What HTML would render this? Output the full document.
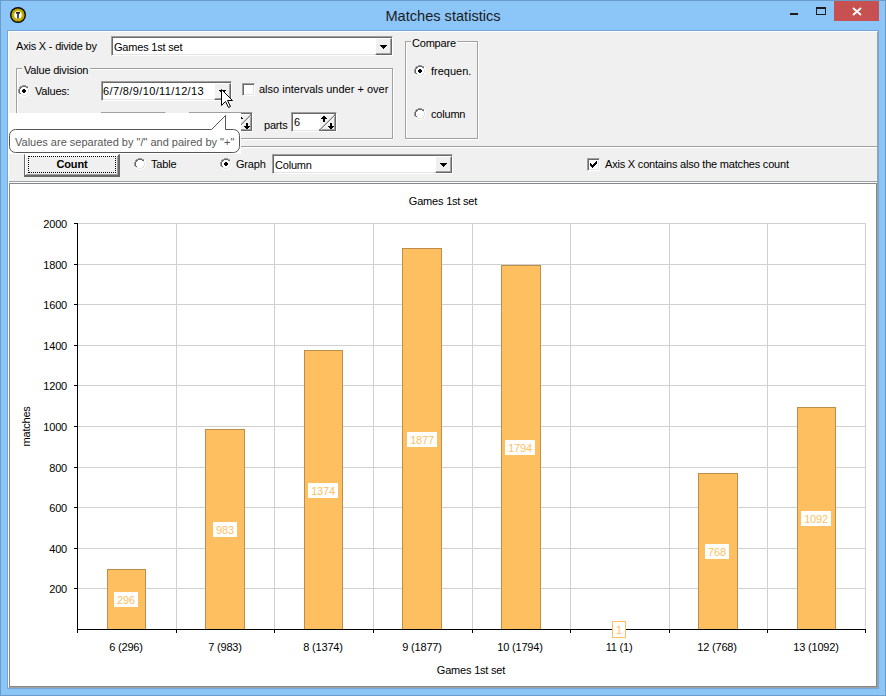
<!DOCTYPE html>
<html><head><meta charset="utf-8">
<style>
*{box-sizing:border-box}
html,body{margin:0;padding:0}
body{width:886px;height:696px;position:relative;overflow:hidden;background:#8cc6f8;font-family:"Liberation Sans",sans-serif;font-size:11px;color:#000}
.a{position:absolute}
.t{position:absolute;white-space:nowrap;line-height:11px;font-size:11px;letter-spacing:-0.2px}
svg{display:block}
</style></head><body>
<div class="a" style="left:0px;top:0px;width:886px;height:696px;border:1px solid #6b9bc9;background:#8cc6f8"></div>
<div class="t" style="left:0;top:9px;width:886px;text-align:center;font-size:14.6px;line-height:15px;letter-spacing:0;color:#1b1b1b">Matches statistics</div>
<svg class="a" style="left:10px;top:7px" width="16" height="16" viewBox="0 0 16 16">
<circle cx="8" cy="8" r="8" fill="#0a0a0a"/>
<circle cx="8" cy="8" r="6.6" fill="#bfa800"/>
<circle cx="8" cy="8" r="5.2" fill="#c9b410" stroke="#a89000" stroke-width="0.6" stroke-dasharray="1 1"/>
<circle cx="8" cy="8" r="3.7" fill="#fff"/>
<rect x="6" y="5" width="4" height="1.6" fill="#222"/>
<rect x="7.2" y="5" width="1.6" height="6.5" fill="#222"/>
</svg>
<div class="a" style="left:790px;top:13px;width:8px;height:2px;background:#1e1a1a"></div>
<div class="a" style="left:816px;top:7px;width:10px;height:8px;border:1px solid #1e1a1a;border-top-width:2px"></div>
<div class="a" style="left:834px;top:1px;width:45px;height:20px;background:#c75050"></div>
<svg class="a" style="left:852px;top:7px" width="10" height="9" viewBox="0 0 10 9"><path d="M1 1L9 8M9 1L1 8" stroke="#fff" stroke-width="1.8"/></svg>
<div class="a" style="left:7px;top:30px;width:872px;height:659px;border:1px solid #72a7da"></div>
<div class="a" style="left:8px;top:31px;width:870px;height:657px;background:#f0f0f0;border-left:1px solid #fff;border-top:1px solid #fff;border-right:1px solid #a0a0a0;border-bottom:1px solid #a0a0a0"></div>
<div class="t" style="left:16px;top:41px;">Axis X - divide by</div>
<div class="a" style="left:111px;top:36px;width:282px;height:20px;background:#fff;border:1px solid;border-color:#a0a0a0 #fff #fff #a0a0a0;box-shadow:inset 1px 1px #696969, inset -1px -1px #e3e3e3"></div>
<div class="a" style="left:375px;top:38px;width:17px;height:17px;background:#f0f0f0;border-style:solid;border-width:1px 1px 1px 1px;border-color:#fff #696969 #696969 #fff;box-shadow:inset -1px -1px #a0a0a0"></div>
<svg class="a" style="left:380px;top:45px" width="7" height="4" shape-rendering="crispEdges"><rect x="0" y="0" width="7" height="1"/><rect x="1" y="1" width="5" height="1"/><rect x="2" y="2" width="3" height="1"/><rect x="3" y="3" width="1" height="1"/></svg>
<div class="t" style="left:114px;top:42px;">Games 1st set</div>
<div class="a" style="left:16px;top:68px;width:377px;height:71px;border:1px solid #a0a0a0;box-shadow:inset 1px 1px #fff, 1px 1px #fff"></div>
<div class="t" style="left:22px;top:65px;padding:0 2px;background:#f0f0f0">Value division</div>
<svg class="a" style="left:18px;top:85px" width="12" height="12" shape-rendering="crispEdges"><rect x="4" y="0" width="4" height="1" fill="#a0a0a0"/><rect x="2" y="1" width="2" height="1" fill="#a0a0a0"/><rect x="4" y="1" width="4" height="1" fill="#696969"/><rect x="8" y="1" width="2" height="1" fill="#a0a0a0"/><rect x="1" y="2" width="1" height="1" fill="#a0a0a0"/><rect x="2" y="2" width="2" height="1" fill="#696969"/><rect x="4" y="2" width="4" height="1" fill="#fff"/><rect x="8" y="2" width="2" height="1" fill="#696969"/><rect x="10" y="2" width="1" height="1" fill="#fff"/><rect x="1" y="3" width="1" height="1" fill="#a0a0a0"/><rect x="2" y="3" width="1" height="1" fill="#696969"/><rect x="3" y="3" width="6" height="1" fill="#fff"/><rect x="9" y="3" width="1" height="1" fill="#e3e3e3"/><rect x="10" y="3" width="1" height="1" fill="#fff"/><rect x="0" y="4" width="1" height="1" fill="#a0a0a0"/><rect x="1" y="4" width="1" height="1" fill="#696969"/><rect x="2" y="4" width="8" height="1" fill="#fff"/><rect x="10" y="4" width="1" height="1" fill="#e3e3e3"/><rect x="11" y="4" width="1" height="1" fill="#fff"/><rect x="0" y="5" width="1" height="1" fill="#a0a0a0"/><rect x="1" y="5" width="1" height="1" fill="#696969"/><rect x="2" y="5" width="8" height="1" fill="#fff"/><rect x="10" y="5" width="1" height="1" fill="#e3e3e3"/><rect x="11" y="5" width="1" height="1" fill="#fff"/><rect x="0" y="6" width="1" height="1" fill="#a0a0a0"/><rect x="1" y="6" width="1" height="1" fill="#696969"/><rect x="2" y="6" width="8" height="1" fill="#fff"/><rect x="10" y="6" width="1" height="1" fill="#e3e3e3"/><rect x="11" y="6" width="1" height="1" fill="#fff"/><rect x="0" y="7" width="1" height="1" fill="#a0a0a0"/><rect x="1" y="7" width="1" height="1" fill="#696969"/><rect x="2" y="7" width="8" height="1" fill="#fff"/><rect x="10" y="7" width="1" height="1" fill="#e3e3e3"/><rect x="11" y="7" width="1" height="1" fill="#fff"/><rect x="1" y="8" width="1" height="1" fill="#a0a0a0"/><rect x="2" y="8" width="1" height="1" fill="#696969"/><rect x="3" y="8" width="6" height="1" fill="#fff"/><rect x="9" y="8" width="1" height="1" fill="#e3e3e3"/><rect x="10" y="8" width="1" height="1" fill="#fff"/><rect x="1" y="9" width="1" height="1" fill="#fff"/><rect x="2" y="9" width="2" height="1" fill="#e3e3e3"/><rect x="4" y="9" width="4" height="1" fill="#fff"/><rect x="8" y="9" width="2" height="1" fill="#e3e3e3"/><rect x="10" y="9" width="1" height="1" fill="#fff"/><rect x="2" y="10" width="2" height="1" fill="#fff"/><rect x="4" y="10" width="4" height="1" fill="#e3e3e3"/><rect x="8" y="10" width="2" height="1" fill="#fff"/><rect x="4" y="11" width="4" height="1" fill="#fff"/><rect x="5" y="4" width="2" height="1" fill="#000"/><rect x="4" y="5" width="4" height="1" fill="#000"/><rect x="4" y="6" width="4" height="1" fill="#000"/><rect x="5" y="7" width="2" height="1" fill="#000"/></svg>
<div class="t" style="left:35px;top:86px;">Values:</div>
<div class="a" style="left:101px;top:81px;width:131px;height:20px;background:#fff;border:1px solid;border-color:#a0a0a0 #fff #fff #a0a0a0;box-shadow:inset 1px 1px #696969, inset -1px -1px #e3e3e3"></div>
<div class="a" style="left:214px;top:83px;width:17px;height:17px;background:#f0f0f0;border-style:solid;border-width:1px 1px 1px 1px;border-color:#fff #696969 #696969 #fff;box-shadow:inset -1px -1px #a0a0a0"></div>
<svg class="a" style="left:219px;top:90px" width="7" height="4" shape-rendering="crispEdges"><rect x="0" y="0" width="7" height="1"/><rect x="1" y="1" width="5" height="1"/><rect x="2" y="2" width="3" height="1"/><rect x="3" y="3" width="1" height="1"/></svg>
<div class="t" style="left:103px;top:86px;letter-spacing:0.37px">6/7/8/9/10/11/12/13</div>
<div class="a" style="left:242px;top:83px;width:13px;height:13px;background:#fff;border:1px solid;border-color:#a0a0a0 #fff #fff #a0a0a0;box-shadow:inset 1px 1px #696969, inset -1px -1px #e3e3e3"></div>
<div class="t" style="left:259px;top:84px;letter-spacing:0">also intervals under + over</div>
<div class="a" style="left:101px;top:112px;width:65px;height:20px;background:#fff;border:1px solid;border-color:#a0a0a0 #fff #fff #a0a0a0;box-shadow:inset 1px 1px #696969, inset -1px -1px #e3e3e3"></div>
<div class="a" style="left:189px;top:112px;width:64px;height:20px;background:#fff;border:1px solid;border-color:#a0a0a0 #fff #fff #a0a0a0;box-shadow:inset 1px 1px #696969, inset -1px -1px #e3e3e3"></div>
<svg class="a" style="left:235px;top:114px" width="17" height="17" viewBox="0 0 17 17" shape-rendering="crispEdges">
<rect x="1" y="1" width="14" height="14" fill="#f0f0f0"/>
<rect x="15" y="0" width="1" height="16" fill="#a0a0a0"/><rect x="16" y="0" width="1" height="17" fill="#696969"/>
<rect x="0" y="15" width="16" height="1" fill="#a0a0a0"/><rect x="0" y="16" width="17" height="1" fill="#696969"/>
<rect x="1" y="0" width="14" height="1" fill="#fff"/>
<path d="M0.5 16.5L16.5 0.5" stroke="#7a7a7a" shape-rendering="auto" stroke-width="1.1"/>
<path d="M2 16L16 2" stroke="#fff" shape-rendering="auto" stroke-width="0.8"/>
<rect x="4" y="2" width="2" height="1"/><rect x="3" y="3" width="4" height="1"/><rect x="2" y="4" width="6" height="1"/><rect x="4" y="5" width="2" height="3"/>
<rect x="11" y="9" width="2" height="3"/><rect x="9" y="12" width="6" height="1"/><rect x="10" y="13" width="4" height="1"/><rect x="11" y="14" width="2" height="1"/>
</svg>
<div class="a" style="left:291px;top:112px;width:46px;height:20px;background:#fff;border:1px solid;border-color:#a0a0a0 #fff #fff #a0a0a0;box-shadow:inset 1px 1px #696969, inset -1px -1px #e3e3e3"></div>
<svg class="a" style="left:319px;top:114px" width="17" height="17" viewBox="0 0 17 17" shape-rendering="crispEdges">
<rect x="1" y="1" width="14" height="14" fill="#f0f0f0"/>
<rect x="15" y="0" width="1" height="16" fill="#a0a0a0"/><rect x="16" y="0" width="1" height="17" fill="#696969"/>
<rect x="0" y="15" width="16" height="1" fill="#a0a0a0"/><rect x="0" y="16" width="17" height="1" fill="#696969"/>
<rect x="1" y="0" width="14" height="1" fill="#fff"/>
<path d="M0.5 16.5L16.5 0.5" stroke="#7a7a7a" shape-rendering="auto" stroke-width="1.1"/>
<path d="M2 16L16 2" stroke="#fff" shape-rendering="auto" stroke-width="0.8"/>
<rect x="4" y="2" width="2" height="1"/><rect x="3" y="3" width="4" height="1"/><rect x="2" y="4" width="6" height="1"/><rect x="4" y="5" width="2" height="3"/>
<rect x="11" y="9" width="2" height="3"/><rect x="9" y="12" width="6" height="1"/><rect x="10" y="13" width="4" height="1"/><rect x="11" y="14" width="2" height="1"/>
</svg>
<div class="t" style="left:264px;top:120px;">parts</div>
<div class="t" style="left:294px;top:117px;">6</div>
<div class="a" style="left:405px;top:41px;width:73px;height:98px;border:1px solid #a0a0a0;box-shadow:inset 1px 1px #fff, 1px 1px #fff"></div>
<div class="t" style="left:411px;top:38px;padding:0 1px;background:#f0f0f0">Compare</div>
<svg class="a" style="left:414px;top:65px" width="12" height="12" shape-rendering="crispEdges"><rect x="4" y="0" width="4" height="1" fill="#a0a0a0"/><rect x="2" y="1" width="2" height="1" fill="#a0a0a0"/><rect x="4" y="1" width="4" height="1" fill="#696969"/><rect x="8" y="1" width="2" height="1" fill="#a0a0a0"/><rect x="1" y="2" width="1" height="1" fill="#a0a0a0"/><rect x="2" y="2" width="2" height="1" fill="#696969"/><rect x="4" y="2" width="4" height="1" fill="#fff"/><rect x="8" y="2" width="2" height="1" fill="#696969"/><rect x="10" y="2" width="1" height="1" fill="#fff"/><rect x="1" y="3" width="1" height="1" fill="#a0a0a0"/><rect x="2" y="3" width="1" height="1" fill="#696969"/><rect x="3" y="3" width="6" height="1" fill="#fff"/><rect x="9" y="3" width="1" height="1" fill="#e3e3e3"/><rect x="10" y="3" width="1" height="1" fill="#fff"/><rect x="0" y="4" width="1" height="1" fill="#a0a0a0"/><rect x="1" y="4" width="1" height="1" fill="#696969"/><rect x="2" y="4" width="8" height="1" fill="#fff"/><rect x="10" y="4" width="1" height="1" fill="#e3e3e3"/><rect x="11" y="4" width="1" height="1" fill="#fff"/><rect x="0" y="5" width="1" height="1" fill="#a0a0a0"/><rect x="1" y="5" width="1" height="1" fill="#696969"/><rect x="2" y="5" width="8" height="1" fill="#fff"/><rect x="10" y="5" width="1" height="1" fill="#e3e3e3"/><rect x="11" y="5" width="1" height="1" fill="#fff"/><rect x="0" y="6" width="1" height="1" fill="#a0a0a0"/><rect x="1" y="6" width="1" height="1" fill="#696969"/><rect x="2" y="6" width="8" height="1" fill="#fff"/><rect x="10" y="6" width="1" height="1" fill="#e3e3e3"/><rect x="11" y="6" width="1" height="1" fill="#fff"/><rect x="0" y="7" width="1" height="1" fill="#a0a0a0"/><rect x="1" y="7" width="1" height="1" fill="#696969"/><rect x="2" y="7" width="8" height="1" fill="#fff"/><rect x="10" y="7" width="1" height="1" fill="#e3e3e3"/><rect x="11" y="7" width="1" height="1" fill="#fff"/><rect x="1" y="8" width="1" height="1" fill="#a0a0a0"/><rect x="2" y="8" width="1" height="1" fill="#696969"/><rect x="3" y="8" width="6" height="1" fill="#fff"/><rect x="9" y="8" width="1" height="1" fill="#e3e3e3"/><rect x="10" y="8" width="1" height="1" fill="#fff"/><rect x="1" y="9" width="1" height="1" fill="#fff"/><rect x="2" y="9" width="2" height="1" fill="#e3e3e3"/><rect x="4" y="9" width="4" height="1" fill="#fff"/><rect x="8" y="9" width="2" height="1" fill="#e3e3e3"/><rect x="10" y="9" width="1" height="1" fill="#fff"/><rect x="2" y="10" width="2" height="1" fill="#fff"/><rect x="4" y="10" width="4" height="1" fill="#e3e3e3"/><rect x="8" y="10" width="2" height="1" fill="#fff"/><rect x="4" y="11" width="4" height="1" fill="#fff"/><rect x="5" y="4" width="2" height="1" fill="#000"/><rect x="4" y="5" width="4" height="1" fill="#000"/><rect x="4" y="6" width="4" height="1" fill="#000"/><rect x="5" y="7" width="2" height="1" fill="#000"/></svg>
<div class="t" style="left:431px;top:66px;letter-spacing:0">frequen.</div>
<svg class="a" style="left:414px;top:108px" width="12" height="12" shape-rendering="crispEdges"><rect x="4" y="0" width="4" height="1" fill="#a0a0a0"/><rect x="2" y="1" width="2" height="1" fill="#a0a0a0"/><rect x="4" y="1" width="4" height="1" fill="#696969"/><rect x="8" y="1" width="2" height="1" fill="#a0a0a0"/><rect x="1" y="2" width="1" height="1" fill="#a0a0a0"/><rect x="2" y="2" width="2" height="1" fill="#696969"/><rect x="4" y="2" width="4" height="1" fill="#fff"/><rect x="8" y="2" width="2" height="1" fill="#696969"/><rect x="10" y="2" width="1" height="1" fill="#fff"/><rect x="1" y="3" width="1" height="1" fill="#a0a0a0"/><rect x="2" y="3" width="1" height="1" fill="#696969"/><rect x="3" y="3" width="6" height="1" fill="#fff"/><rect x="9" y="3" width="1" height="1" fill="#e3e3e3"/><rect x="10" y="3" width="1" height="1" fill="#fff"/><rect x="0" y="4" width="1" height="1" fill="#a0a0a0"/><rect x="1" y="4" width="1" height="1" fill="#696969"/><rect x="2" y="4" width="8" height="1" fill="#fff"/><rect x="10" y="4" width="1" height="1" fill="#e3e3e3"/><rect x="11" y="4" width="1" height="1" fill="#fff"/><rect x="0" y="5" width="1" height="1" fill="#a0a0a0"/><rect x="1" y="5" width="1" height="1" fill="#696969"/><rect x="2" y="5" width="8" height="1" fill="#fff"/><rect x="10" y="5" width="1" height="1" fill="#e3e3e3"/><rect x="11" y="5" width="1" height="1" fill="#fff"/><rect x="0" y="6" width="1" height="1" fill="#a0a0a0"/><rect x="1" y="6" width="1" height="1" fill="#696969"/><rect x="2" y="6" width="8" height="1" fill="#fff"/><rect x="10" y="6" width="1" height="1" fill="#e3e3e3"/><rect x="11" y="6" width="1" height="1" fill="#fff"/><rect x="0" y="7" width="1" height="1" fill="#a0a0a0"/><rect x="1" y="7" width="1" height="1" fill="#696969"/><rect x="2" y="7" width="8" height="1" fill="#fff"/><rect x="10" y="7" width="1" height="1" fill="#e3e3e3"/><rect x="11" y="7" width="1" height="1" fill="#fff"/><rect x="1" y="8" width="1" height="1" fill="#a0a0a0"/><rect x="2" y="8" width="1" height="1" fill="#696969"/><rect x="3" y="8" width="6" height="1" fill="#fff"/><rect x="9" y="8" width="1" height="1" fill="#e3e3e3"/><rect x="10" y="8" width="1" height="1" fill="#fff"/><rect x="1" y="9" width="1" height="1" fill="#fff"/><rect x="2" y="9" width="2" height="1" fill="#e3e3e3"/><rect x="4" y="9" width="4" height="1" fill="#fff"/><rect x="8" y="9" width="2" height="1" fill="#e3e3e3"/><rect x="10" y="9" width="1" height="1" fill="#fff"/><rect x="2" y="10" width="2" height="1" fill="#fff"/><rect x="4" y="10" width="4" height="1" fill="#e3e3e3"/><rect x="8" y="10" width="2" height="1" fill="#fff"/><rect x="4" y="11" width="4" height="1" fill="#fff"/></svg>
<div class="t" style="left:431px;top:109px;">column</div>
<div class="a" style="left:9px;top:146px;width:868px;height:1px;background:#a0a0a0"></div>
<div class="a" style="left:9px;top:147px;width:868px;height:1px;background:#fff"></div>
<div class="a" style="left:24px;top:154px;width:96px;height:23px;border-style:solid;border-width:1px 2px 2px 1px;border-color:#fff #696969 #696969 #696969;box-shadow:inset 1px 1px #fff, inset -1px -1px #a0a0a0;background:#f0f0f0"></div>
<div class="a" style="left:28px;top:156px;width:88px;height:17px;border:1px dotted #000"></div>
<div class="t" style="left:24px;top:159px;width:96px;text-align:center;font-weight:bold">Count</div>
<svg class="a" style="left:134px;top:158px" width="12" height="12" shape-rendering="crispEdges"><rect x="4" y="0" width="4" height="1" fill="#a0a0a0"/><rect x="2" y="1" width="2" height="1" fill="#a0a0a0"/><rect x="4" y="1" width="4" height="1" fill="#696969"/><rect x="8" y="1" width="2" height="1" fill="#a0a0a0"/><rect x="1" y="2" width="1" height="1" fill="#a0a0a0"/><rect x="2" y="2" width="2" height="1" fill="#696969"/><rect x="4" y="2" width="4" height="1" fill="#fff"/><rect x="8" y="2" width="2" height="1" fill="#696969"/><rect x="10" y="2" width="1" height="1" fill="#fff"/><rect x="1" y="3" width="1" height="1" fill="#a0a0a0"/><rect x="2" y="3" width="1" height="1" fill="#696969"/><rect x="3" y="3" width="6" height="1" fill="#fff"/><rect x="9" y="3" width="1" height="1" fill="#e3e3e3"/><rect x="10" y="3" width="1" height="1" fill="#fff"/><rect x="0" y="4" width="1" height="1" fill="#a0a0a0"/><rect x="1" y="4" width="1" height="1" fill="#696969"/><rect x="2" y="4" width="8" height="1" fill="#fff"/><rect x="10" y="4" width="1" height="1" fill="#e3e3e3"/><rect x="11" y="4" width="1" height="1" fill="#fff"/><rect x="0" y="5" width="1" height="1" fill="#a0a0a0"/><rect x="1" y="5" width="1" height="1" fill="#696969"/><rect x="2" y="5" width="8" height="1" fill="#fff"/><rect x="10" y="5" width="1" height="1" fill="#e3e3e3"/><rect x="11" y="5" width="1" height="1" fill="#fff"/><rect x="0" y="6" width="1" height="1" fill="#a0a0a0"/><rect x="1" y="6" width="1" height="1" fill="#696969"/><rect x="2" y="6" width="8" height="1" fill="#fff"/><rect x="10" y="6" width="1" height="1" fill="#e3e3e3"/><rect x="11" y="6" width="1" height="1" fill="#fff"/><rect x="0" y="7" width="1" height="1" fill="#a0a0a0"/><rect x="1" y="7" width="1" height="1" fill="#696969"/><rect x="2" y="7" width="8" height="1" fill="#fff"/><rect x="10" y="7" width="1" height="1" fill="#e3e3e3"/><rect x="11" y="7" width="1" height="1" fill="#fff"/><rect x="1" y="8" width="1" height="1" fill="#a0a0a0"/><rect x="2" y="8" width="1" height="1" fill="#696969"/><rect x="3" y="8" width="6" height="1" fill="#fff"/><rect x="9" y="8" width="1" height="1" fill="#e3e3e3"/><rect x="10" y="8" width="1" height="1" fill="#fff"/><rect x="1" y="9" width="1" height="1" fill="#fff"/><rect x="2" y="9" width="2" height="1" fill="#e3e3e3"/><rect x="4" y="9" width="4" height="1" fill="#fff"/><rect x="8" y="9" width="2" height="1" fill="#e3e3e3"/><rect x="10" y="9" width="1" height="1" fill="#fff"/><rect x="2" y="10" width="2" height="1" fill="#fff"/><rect x="4" y="10" width="4" height="1" fill="#e3e3e3"/><rect x="8" y="10" width="2" height="1" fill="#fff"/><rect x="4" y="11" width="4" height="1" fill="#fff"/></svg>
<div class="t" style="left:151px;top:159px;">Table</div>
<svg class="a" style="left:220px;top:158px" width="12" height="12" shape-rendering="crispEdges"><rect x="4" y="0" width="4" height="1" fill="#a0a0a0"/><rect x="2" y="1" width="2" height="1" fill="#a0a0a0"/><rect x="4" y="1" width="4" height="1" fill="#696969"/><rect x="8" y="1" width="2" height="1" fill="#a0a0a0"/><rect x="1" y="2" width="1" height="1" fill="#a0a0a0"/><rect x="2" y="2" width="2" height="1" fill="#696969"/><rect x="4" y="2" width="4" height="1" fill="#fff"/><rect x="8" y="2" width="2" height="1" fill="#696969"/><rect x="10" y="2" width="1" height="1" fill="#fff"/><rect x="1" y="3" width="1" height="1" fill="#a0a0a0"/><rect x="2" y="3" width="1" height="1" fill="#696969"/><rect x="3" y="3" width="6" height="1" fill="#fff"/><rect x="9" y="3" width="1" height="1" fill="#e3e3e3"/><rect x="10" y="3" width="1" height="1" fill="#fff"/><rect x="0" y="4" width="1" height="1" fill="#a0a0a0"/><rect x="1" y="4" width="1" height="1" fill="#696969"/><rect x="2" y="4" width="8" height="1" fill="#fff"/><rect x="10" y="4" width="1" height="1" fill="#e3e3e3"/><rect x="11" y="4" width="1" height="1" fill="#fff"/><rect x="0" y="5" width="1" height="1" fill="#a0a0a0"/><rect x="1" y="5" width="1" height="1" fill="#696969"/><rect x="2" y="5" width="8" height="1" fill="#fff"/><rect x="10" y="5" width="1" height="1" fill="#e3e3e3"/><rect x="11" y="5" width="1" height="1" fill="#fff"/><rect x="0" y="6" width="1" height="1" fill="#a0a0a0"/><rect x="1" y="6" width="1" height="1" fill="#696969"/><rect x="2" y="6" width="8" height="1" fill="#fff"/><rect x="10" y="6" width="1" height="1" fill="#e3e3e3"/><rect x="11" y="6" width="1" height="1" fill="#fff"/><rect x="0" y="7" width="1" height="1" fill="#a0a0a0"/><rect x="1" y="7" width="1" height="1" fill="#696969"/><rect x="2" y="7" width="8" height="1" fill="#fff"/><rect x="10" y="7" width="1" height="1" fill="#e3e3e3"/><rect x="11" y="7" width="1" height="1" fill="#fff"/><rect x="1" y="8" width="1" height="1" fill="#a0a0a0"/><rect x="2" y="8" width="1" height="1" fill="#696969"/><rect x="3" y="8" width="6" height="1" fill="#fff"/><rect x="9" y="8" width="1" height="1" fill="#e3e3e3"/><rect x="10" y="8" width="1" height="1" fill="#fff"/><rect x="1" y="9" width="1" height="1" fill="#fff"/><rect x="2" y="9" width="2" height="1" fill="#e3e3e3"/><rect x="4" y="9" width="4" height="1" fill="#fff"/><rect x="8" y="9" width="2" height="1" fill="#e3e3e3"/><rect x="10" y="9" width="1" height="1" fill="#fff"/><rect x="2" y="10" width="2" height="1" fill="#fff"/><rect x="4" y="10" width="4" height="1" fill="#e3e3e3"/><rect x="8" y="10" width="2" height="1" fill="#fff"/><rect x="4" y="11" width="4" height="1" fill="#fff"/><rect x="5" y="4" width="2" height="1" fill="#000"/><rect x="4" y="5" width="4" height="1" fill="#000"/><rect x="4" y="6" width="4" height="1" fill="#000"/><rect x="5" y="7" width="2" height="1" fill="#000"/></svg>
<div class="t" style="left:236px;top:159px;">Graph</div>
<div class="a" style="left:272px;top:154px;width:181px;height:20px;background:#fff;border:1px solid;border-color:#a0a0a0 #fff #fff #a0a0a0;box-shadow:inset 1px 1px #696969, inset -1px -1px #e3e3e3"></div>
<div class="a" style="left:435px;top:156px;width:17px;height:17px;background:#f0f0f0;border-style:solid;border-width:1px 1px 1px 1px;border-color:#fff #696969 #696969 #fff;box-shadow:inset -1px -1px #a0a0a0"></div>
<svg class="a" style="left:440px;top:163px" width="7" height="4" shape-rendering="crispEdges"><rect x="0" y="0" width="7" height="1"/><rect x="1" y="1" width="5" height="1"/><rect x="2" y="2" width="3" height="1"/><rect x="3" y="3" width="1" height="1"/></svg>
<div class="t" style="left:275px;top:160px;">Column</div>
<div class="a" style="left:587px;top:158px;width:13px;height:13px;background:#fff;border:1px solid;border-color:#a0a0a0 #fff #fff #a0a0a0;box-shadow:inset 1px 1px #696969, inset -1px -1px #e3e3e3"></div>
<svg class="a" style="left:587px;top:158px" width="13" height="13" shape-rendering="crispEdges"><rect x="9" y="3" width="1" height="1" fill="#000"/><rect x="8" y="4" width="2" height="1" fill="#000"/><rect x="3" y="5" width="1" height="1" fill="#000"/><rect x="7" y="5" width="3" height="1" fill="#000"/><rect x="3" y="6" width="2" height="1" fill="#000"/><rect x="6" y="6" width="3" height="1" fill="#000"/><rect x="3" y="7" width="5" height="1" fill="#000"/><rect x="4" y="8" width="3" height="1" fill="#000"/><rect x="5" y="9" width="1" height="1" fill="#000"/></svg>
<div class="t" style="left:605px;top:159px;">Axis X contains also the matches count</div>
<div class="a" style="left:9px;top:181px;width:868px;height:1px;background:#a0a0a0"></div>
<div class="a" style="left:9px;top:182px;width:868px;height:1px;background:#fff"></div>
<div class="a" style="left:9px;top:183px;width:868px;height:504px;background:#fff;border:1px solid #828790"></div>
<svg class="a" style="left:0;top:0" width="886" height="696"><path d="M78 588.5H865.5" stroke="#d0d0d0"/><path d="M74 588.5H77" stroke="#000"/><path d="M78 548.5H865.5" stroke="#d0d0d0"/><path d="M74 548.5H77" stroke="#000"/><path d="M78 507.5H865.5" stroke="#d0d0d0"/><path d="M74 507.5H77" stroke="#000"/><path d="M78 467.5H865.5" stroke="#d0d0d0"/><path d="M74 467.5H77" stroke="#000"/><path d="M78 426.5H865.5" stroke="#d0d0d0"/><path d="M74 426.5H77" stroke="#000"/><path d="M78 385.5H865.5" stroke="#d0d0d0"/><path d="M74 385.5H77" stroke="#000"/><path d="M78 345.5H865.5" stroke="#d0d0d0"/><path d="M74 345.5H77" stroke="#000"/><path d="M78 304.5H865.5" stroke="#d0d0d0"/><path d="M74 304.5H77" stroke="#000"/><path d="M78 264.5H865.5" stroke="#d0d0d0"/><path d="M74 264.5H77" stroke="#000"/><path d="M78 223.5H865.5" stroke="#d0d0d0"/><path d="M74 223.5H77" stroke="#000"/><path d="M176.5 223V629" stroke="#d0d0d0"/><path d="M274.5 223V629" stroke="#d0d0d0"/><path d="M373.5 223V629" stroke="#d0d0d0"/><path d="M472.5 223V629" stroke="#d0d0d0"/><path d="M570.5 223V629" stroke="#d0d0d0"/><path d="M669.5 223V629" stroke="#d0d0d0"/><path d="M767.5 223V629" stroke="#d0d0d0"/><path d="M865.5 223V629" stroke="#d0d0d0"/></svg>
<div class="a" style="left:107px;top:569px;width:39px;height:61px;background:#fdbf5f;border:1px solid #bd8e4a;border-bottom:none"></div>
<div class="a" style="left:205px;top:429px;width:40px;height:201px;background:#fdbf5f;border:1px solid #bd8e4a;border-bottom:none"></div>
<div class="a" style="left:304px;top:350px;width:39px;height:280px;background:#fdbf5f;border:1px solid #bd8e4a;border-bottom:none"></div>
<div class="a" style="left:402px;top:248px;width:40px;height:382px;background:#fdbf5f;border:1px solid #bd8e4a;border-bottom:none"></div>
<div class="a" style="left:501px;top:265px;width:40px;height:365px;background:#fdbf5f;border:1px solid #bd8e4a;border-bottom:none"></div>
<div class="a" style="left:698px;top:473px;width:40px;height:157px;background:#fdbf5f;border:1px solid #bd8e4a;border-bottom:none"></div>
<div class="a" style="left:797px;top:407px;width:39px;height:223px;background:#fdbf5f;border:1px solid #bd8e4a;border-bottom:none"></div>
<svg class="a" style="left:0;top:0" width="886" height="696"><path d="M77.5 223V629.5H865.5" stroke="#000" fill="none"/><path d="M77.5 629V633" stroke="#000"/><path d="M176.5 629V633" stroke="#000"/><path d="M274.5 629V633" stroke="#000"/><path d="M373.5 629V633" stroke="#000"/><path d="M472.5 629V633" stroke="#000"/><path d="M570.5 629V633" stroke="#000"/><path d="M669.5 629V633" stroke="#000"/><path d="M767.5 629V633" stroke="#000"/><path d="M865.5 629V633" stroke="#000"/></svg>
<div class="a" style="left:113px;top:591px;width:26px;height:17px;background:#fff;border:1px solid #fdbf5f"></div>
<div class="t" style="left:113px;top:595px;width:26px;text-align:center;color:#fdbf5f">296</div>
<div class="t" style="left:66px;top:642px;width:120px;text-align:center">6 (296)</div>
<div class="a" style="left:212px;top:521px;width:26px;height:17px;background:#fff;border:1px solid #fdbf5f"></div>
<div class="t" style="left:212px;top:525px;width:26px;text-align:center;color:#fdbf5f">983</div>
<div class="t" style="left:165px;top:642px;width:120px;text-align:center">7 (983)</div>
<div class="a" style="left:307px;top:482px;width:32px;height:17px;background:#fff;border:1px solid #fdbf5f"></div>
<div class="t" style="left:307px;top:486px;width:32px;text-align:center;color:#fdbf5f">1374</div>
<div class="t" style="left:263px;top:642px;width:120px;text-align:center">8 (1374)</div>
<div class="a" style="left:406px;top:431px;width:32px;height:17px;background:#fff;border:1px solid #fdbf5f"></div>
<div class="t" style="left:406px;top:435px;width:32px;text-align:center;color:#fdbf5f">1877</div>
<div class="t" style="left:362px;top:642px;width:120px;text-align:center">9 (1877)</div>
<div class="a" style="left:504px;top:439px;width:32px;height:17px;background:#fff;border:1px solid #fdbf5f"></div>
<div class="t" style="left:504px;top:443px;width:32px;text-align:center;color:#fdbf5f">1794</div>
<div class="t" style="left:460px;top:642px;width:120px;text-align:center">10 (1794)</div>
<div class="a" style="left:612px;top:621px;width:14px;height:17px;background:#fff;border:1px solid #fdbf5f"></div>
<div class="t" style="left:612px;top:625px;width:14px;text-align:center;color:#fdbf5f">1</div>
<div class="t" style="left:559px;top:642px;width:120px;text-align:center">11 (1)</div>
<div class="a" style="left:704px;top:543px;width:26px;height:17px;background:#fff;border:1px solid #fdbf5f"></div>
<div class="t" style="left:704px;top:547px;width:26px;text-align:center;color:#fdbf5f">768</div>
<div class="t" style="left:657px;top:642px;width:120px;text-align:center">12 (768)</div>
<div class="a" style="left:800px;top:510px;width:32px;height:17px;background:#fff;border:1px solid #fdbf5f"></div>
<div class="t" style="left:800px;top:514px;width:32px;text-align:center;color:#fdbf5f">1092</div>
<div class="t" style="left:756px;top:642px;width:120px;text-align:center">13 (1092)</div>
<div class="t" style="left:0;top:584px;width:67px;text-align:right">200</div>
<div class="t" style="left:0;top:544px;width:67px;text-align:right">400</div>
<div class="t" style="left:0;top:503px;width:67px;text-align:right">600</div>
<div class="t" style="left:0;top:463px;width:67px;text-align:right">800</div>
<div class="t" style="left:0;top:422px;width:67px;text-align:right">1000</div>
<div class="t" style="left:0;top:381px;width:67px;text-align:right">1200</div>
<div class="t" style="left:0;top:341px;width:67px;text-align:right">1400</div>
<div class="t" style="left:0;top:300px;width:67px;text-align:right">1600</div>
<div class="t" style="left:0;top:260px;width:67px;text-align:right">1800</div>
<div class="t" style="left:0;top:219px;width:67px;text-align:right">2000</div>
<div class="t" style="left:0px;top:196px;width:886px;text-align:center;left:0">Games 1st set</div>
<div class="t" style="left:77px;top:665px;width:788px;text-align:center">Games 1st set</div>
<div class="t" style="left:6px;top:421px;width:40px;transform:rotate(-90deg);transform-origin:50% 50%;text-align:center">matches</div>
<svg class="a" style="left:8px;top:113px" width="233" height="41" viewBox="0 0 233 41">
<rect x="0" y="0" width="233" height="41" fill="#fff"/>
<path d="M217.5 16.5V2.5L203.5 16.5H7.5A6 6 0 0 0 1.5 22.5V33.5A6 6 0 0 0 7.5 39.5H225.5A6 6 0 0 0 231.5 33.5V22.5A6 6 0 0 0 225.5 16.5Z" fill="#fff" stroke="#555"/>
</svg>
<div class="t" style="left:15px;top:137px;color:#575757;letter-spacing:0">Values are separated by "/" and paired by "+"</div>
<svg class="a" style="left:221px;top:89px" width="13" height="20" viewBox="0 0 13 20">
<path d="M0.5 0.5V16.5L4.5 12.5L7.5 18.5L9.5 17.5L6.5 11.5H11.5Z" fill="#fff" stroke="#000" stroke-linejoin="miter"/>
</svg>
</body></html>
